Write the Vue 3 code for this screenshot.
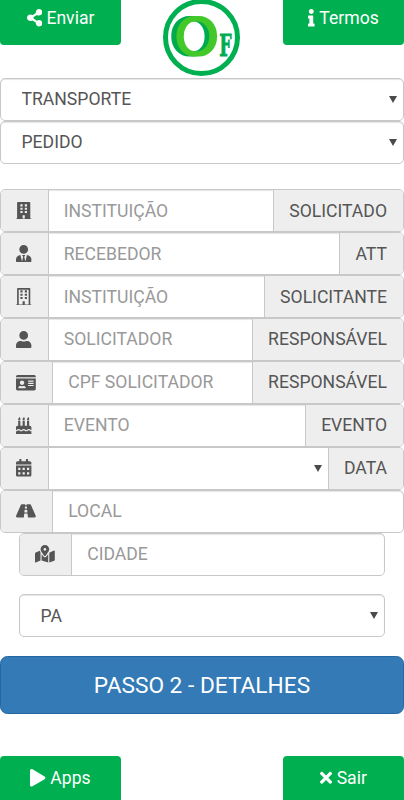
<script setup>
const box = (x, y, w, h) => `M${x} ${y}h${w}v${h}h${-w}z`
const windows = [128, 256].flatMap((x) => [76, 172, 268].map((y) => box(x, y - 8, 64, 60))).join('')
const cells = [64, 192, 320].flatMap((x) => [256, 384].map((y) => box(x, y, 64, 64))).join('')
const flame = (x) => `M${x} 96c-17.75 0-32-14.25-32-32 0-31 32-23 32-64 12 0 32 29.5 32 56s-14.25 40-32 40z`
const line = (y) => `M360 ${y}h144c4.4 0 8 3.6 8 8v16c0 4.4-3.6 8-8 8H360c-4.4 0-8-3.6-8-8v-16c0-4.4 3.6-8 8-8z`

const icons = {
  share: { w: 448, d: 'M352 320c-22.608 0-43.387 7.819-59.79 20.895l-102.486-64.054a96.551 96.551 0 0 0 0-41.683l102.486-64.054C308.613 184.181 329.392 192 352 192c53.019 0 96-42.981 96-96S405.019 0 352 0s-96 42.981-96 96c0 7.158.79 14.13 2.276 20.841L155.79 180.895C139.387 167.819 118.608 160 96 160c-53.019 0-96 42.981-96 96s42.981 96 96 96c22.608 0 43.387-7.819 59.79-20.895l102.486 64.054A96.301 96.301 0 0 0 256 416c0 53.019 42.981 96 96 96s96-42.981 96-96-42.981-96-96-96z' },
  info: { w: 192, d: 'M20 424.229h20V279.771H20c-11.046 0-20-8.954-20-20V212c0-11.046 8.954-20 20-20h112c11.046 0 20 8.954 20 20v212.229h20c11.046 0 20 8.954 20 20V492c0 11.046-8.954 20-20 20H20c-11.046 0-20-8.954-20-20v-47.771c0-11.046 8.954-20 20-20zM96 0C56.235 0 24 32.235 24 72s32.235 72 72 72 72-32.235 72-72S135.764 0 96 0z' },
  building: { w: 448, d: 'M436 480h-20V24c0-13.255-10.745-24-24-24H56C42.745 0 32 10.745 32 24v456H12c-6.627 0-12 5.373-12 12v20h448v-20c0-6.627-5.373-12-12-12z' + windows + box(192, 384, 64, 96) },
  buildingOutline: { w: 448, d: 'M436 480h-20V24c0-13.255-10.745-24-24-24H56C42.745 0 32 10.745 32 24v456H12c-6.627 0-12 5.373-12 12v20h448v-20c0-6.627-5.373-12-12-12zM80 48v431h112v-83c0-6.6 5.4-12 12-12h40c6.6 0 12 5.4 12 12v83h112V48z' + windows },
  userTie: { w: 448, d: 'M224 256c70.7 0 128-57.3 128-128S294.7 0 224 0 96 57.3 96 128s57.3 128 128 128zm95.8 32.6L272 480l-32-136 32-56h-96l32 56-32 136-47.8-191.4C56.9 292 0 350.3 0 422.4V464c0 26.5 21.5 48 48 48h352c26.5 0 48-21.5 48-48v-41.6c0-72.1-56.9-130.4-128.2-133.8z' },
  user: { w: 448, d: 'M224 256c70.7 0 128-57.3 128-128S294.7 0 224 0 96 57.3 96 128s57.3 128 128 128zm89.6 32h-16.7c-22.2 10.2-46.9 16-72.9 16s-50.6-5.8-72.9-16h-16.7C60.2 288 0 348.2 0 422.4V464c0 26.5 21.5 48 48 48h352c26.5 0 48-21.5 48-48v-41.6c0-74.2-60.2-134.4-134.4-134.4z' },
  idCard: { w: 576, d: 'M528 32H48C21.5 32 0 53.5 0 80v16h576V80c0-26.5-21.5-48-48-48zM0 432c0 26.5 21.5 48 48 48h480c26.5 0 48-21.5 48-48V128H0v304zM176 192c35.3 0 64 28.7 64 64s-28.7 64-64 64-64-28.7-64-64 28.7-64 64-64zM67.1 396.2C75.5 370.5 99.6 352 128 352h8.2c12.3 5.1 25.7 8 39.8 8s27.6-2.9 39.8-8h8.2c28.4 0 52.5 18.5 60.9 44.2 3.2 9.9-5.2 19.8-15.6 19.8H82.7c-10.4 0-18.8-10-15.6-19.8z' + line(192) + line(256) + line(320) },
  cake: { w: 448, d: 'M448 384c-28.02 0-31.26-32-74.5-32-43.43 0-46.825 32-74.75 32-27.695 0-31.454-32-74.75-32-42.842 0-47.218 32-74.5 32-28.148 0-31.202-32-74.75-32-43.547 0-46.653 32-74.75 32v-80c0-26.5 21.5-48 48-48h16V112h64v144h64V112h64v144h64V112h64v144h16c26.5 0 48 21.5 48 48v80zm0 128H0v-96c43.356 0 46.767-32 74.75-32 27.951 0 31.253 32 74.75 32 42.843 0 47.217-32 74.5-32 28.148 0 31.201 32 74.75 32 43.357 0 46.767-32 74.75-32 27.488 0 31.252 32 74.5 32v96z' + flame(96) + flame(224) + flame(352) },
  calendar: { w: 448, d: 'M0 464c0 26.5 21.5 48 48 48h352c26.5 0 48-21.5 48-48V192H0v272zM400 64h-48V16c0-8.8-7.2-16-16-16h-32c-8.8 0-16 7.2-16 16v48H160V16c0-8.8-7.2-16-16-16h-32c-8.8 0-16 7.2-16 16v48H48C21.5 64 0 85.5 0 112v48h448v-48c0-26.5-21.5-48-48-48z' + cells },
  road: { w: 576, d: 'M573.19 402.67l-139.79-320C428.43 71.29 417.6 64 405.68 64h-97.59l2.45 23.16c.5 4.72-3.21 8.84-7.96 8.84h-29.16c-4.75 0-8.46-4.12-7.96-8.84L267.91 64h-97.59c-11.93 0-22.76 7.29-27.73 18.67L2.8 402.67C-6.45 423.86 8.31 448 30.54 448h196.84l10.31-97.68c.86-8.14 7.72-14.32 15.91-14.32h68.8c8.19 0 15.05 6.18 15.91 14.32L348.62 448h196.84c22.23 0 36.99-24.14 27.73-45.33zM260.4 135.16a8 8 0 0 1 7.96-7.16h39.29c4.09 0 7.53 3.09 7.96 7.16l4.6 43.58c.75 7.09-4.81 13.26-11.93 13.26h-40.54c-7.13 0-12.68-6.17-11.93-13.26l4.59-43.58zM315.64 304h-55.29c-9.5 0-16.91-8.23-15.91-17.68l5.07-48c.86-8.14 7.72-14.32 15.91-14.32h45.15c8.19 0 15.05 6.18 15.91 14.32l5.07 48c1 9.45-6.41 17.68-15.91 17.68z' },
  map: { w: 576, d: 'M288 0c-69.59 0-126 56.41-126 126 0 56.26 82.35 158.8 113.9 196.02 6.39 7.54 17.82 7.54 24.2 0C331.65 284.8 414 182.26 414 126 414 56.41 357.59 0 288 0zm0 168c-23.2 0-42-18.8-42-42s18.8-42 42-42 42 18.8 42 42-18.8 42-42 42zM20.12 215.95A32.006 32.006 0 0 0 0 245.66v250.32c0 11.32 11.43 19.06 21.94 14.86L160 448V214.92c-8.84-15.98-16.07-31.54-21.25-46.42L20.12 215.95zM288 359.67c-14.07 0-27.38-6.18-36.51-16.96-19.66-23.2-40.57-49.62-59.49-76.72v182l192 64V266c-18.92 27.09-39.82 53.52-59.49 76.72-9.13 10.77-22.44 16.95-36.51 16.95zm266.06-198.51L416 224v288l139.88-55.95A31.996 31.996 0 0 0 576 426.34V176.02c0-11.32-11.43-19.06-21.94-14.86z' },
  play: { w: 448, d: 'M424.4 214.7L72.4 6.6C43.8-10.3 0 6.1 0 47.9V464c0 37.5 40.7 60.1 72.4 41.3l352-208c31.4-18.5 31.5-64.1 0-82.6z' },
  times: { w: 352, d: 'M242.72 256l100.07-100.07c12.28-12.28 12.28-32.19 0-44.48l-22.24-22.24c-12.28-12.28-32.19-12.28-44.48 0L176 189.28 75.93 89.21c-12.28-12.28-32.19-12.28-44.48 0L9.21 111.45c-12.28 12.28-12.28 32.19 0 44.48L109.28 256 9.21 356.07c-12.28 12.28-12.28 32.19 0 44.48l22.24 22.24c12.28 12.28 32.2 12.28 44.48 0L176 322.72l100.07 100.07c12.28 12.28 32.2 12.28 44.48 0l22.24-22.24c12.28-12.28 12.28-32.19 0-44.48L242.72 256z' },
}

const selects = ['TRANSPORTE', 'PEDIDO']
const fields = [
  { icon: 'building', placeholder: 'INSTITUIÇÃO', label: 'SOLICITADO' },
  { icon: 'userTie', placeholder: 'RECEBEDOR', label: 'ATT' },
  { icon: 'buildingOutline', placeholder: 'INSTITUIÇÃO', label: 'SOLICITANTE' },
  { icon: 'user', placeholder: 'SOLICITADOR', label: 'RESPONSÁVEL' },
  { icon: 'idCard', placeholder: 'CPF SOLICITADOR', label: 'RESPONSÁVEL' },
  { icon: 'cake', placeholder: 'EVENTO', label: 'EVENTO' },
  { icon: 'calendar', select: true, label: 'DATA' },
  { icon: 'road', placeholder: 'LOCAL' },
  { icon: 'map', placeholder: 'CIDADE', inset: true },
]
</script>

<template>
  <main class="page">
    <header class="top">
      <button class="nav nav-top">
        <svg class="icon icon-share" :viewBox="`0 0 ${icons.share.w} 512`"><path :d="icons.share.d" /></svg>
        <span>Enviar</span>
      </button>
      <svg class="logo" viewBox="0 0 78 78">
        <circle cx="38.5" cy="38.5" r="36" fill="#fff" stroke="#00b050" stroke-width="5" />
        <rect x="8.300" y="17" width="40" height="40.600" rx="18" ry="19" fill="#00ab50" />
        <rect x="13.500" y="17" width="40.500" height="40.600" rx="18" ry="19" fill="#43c829" />
        <ellipse cx="34" cy="37.400" rx="12.300" ry="14.900" fill="#00ab50" />
        <ellipse cx="31.200" cy="37.400" rx="10.400" ry="14.600" fill="#fff" />
        <text class="logo-f" transform="translate(56.2 56.6) scale(0.6 1)">F</text>
      </svg>
      <button class="nav nav-top">
        <svg class="icon icon-info" :viewBox="`0 0 ${icons.info.w} 512`"><path :d="icons.info.d" /></svg>
        <span>Termos</span>
      </button>
    </header>

    <section class="selects">
      <div v-for="name in selects" :key="name" class="select control">
        <select :aria-label="name"><option>{{ name }}</option></select>
        <i class="arrow"></i>
      </div>
    </section>

    <section class="fields">
      <div v-for="(field, i) in fields" :key="i" class="group" :class="{ inset: field.inset }">
        <span class="addon" :class="{ wide: icons[field.icon].w > 500 }">
          <svg class="icon" :viewBox="`0 0 ${icons[field.icon].w} 512`"><path :d="icons[field.icon].d" /></svg>
        </span>
        <div v-if="field.select" class="select grow">
          <select :aria-label="field.label"></select>
          <i class="arrow"></i>
        </div>
        <input v-else class="grow" type="text" :placeholder="field.placeholder" />
        <span v-if="field.label" class="label">{{ field.label }}</span>
      </div>
    </section>

    <div class="select control state">
      <select aria-label="UF"><option>PA</option></select>
      <i class="arrow"></i>
    </div>

    <button class="next">PASSO 2 - DETALHES</button>

    <footer class="bottom">
      <button class="nav nav-bottom">
        <svg class="icon icon-play" :viewBox="`0 0 ${icons.play.w} 512`"><path :d="icons.play.d" /></svg>
        <span>Apps</span>
      </button>
      <button class="nav nav-bottom">
        <svg class="icon icon-times" :viewBox="`0 0 ${icons.times.w} 512`"><path :d="icons.times.d" /></svg>
        <span>Sair</span>
      </button>
    </footer>
  </main>
</template>

<style>
body {
  background: #fff;
  overflow: hidden;
}
</style>

<style scoped>
.page,
.page * {
  box-sizing: border-box;
}
.page {
  display: flex;
  flex-direction: column;
  width: 404px;
  height: 800px;
  overflow: hidden;
  font-family: Roboto, "Liberation Sans", sans-serif;
  font-size: 17.6px;
  color: #555;
}
button,
select,
input {
  font: inherit;
  color: inherit;
  margin: 0;
  border: 0;
  outline: 0;
}
.top,
.bottom {
  display: flex;
  justify-content: space-between;
  flex: none;
}
.top {
  height: 78px;
}
.nav {
  display: flex;
  justify-content: center;
  align-items: center;
  gap: 4.5px;
  width: 121px;
  padding: 0;
  background: #00b050;
  color: #fff;
}
.nav-top {
  height: 45.4px;
  padding-bottom: 9.6px;
  border-radius: 0 0 4px 4px;
}
.nav-bottom {
  height: 44px;
  border-radius: 4px 4px 0 0;
}
.icon {
  display: block;
  height: 17.6px;
  fill: currentColor;
  fill-rule: evenodd;
}
.icon-share,
.icon-play {
  width: 15.4px;
}
.icon-info {
  width: 6.6px;
}
.icon-times {
  width: 12.1px;
}
.logo {
  width: 78px;
  height: 78px;
  margin-top: -1px;
}
.logo-f {
  font: bold 29px "DejaVu Serif", serif;
  fill: #00ab50;
  stroke: #00ab50;
  stroke-width: 0.8px;
}
.selects {
  flex: none;
  margin-bottom: 25.3px;
}
.select {
  display: grid;
  align-items: center;
  background: #fff;
}
.select > * {
  grid-area: 1 / 1;
}
.select select {
  appearance: none;
  width: 100%;
  height: 100%;
  padding: 0 30px 0 20.5px;
  background: transparent;
}
.control {
  height: 42.95px;
  border: 1px solid #c8c8c8;
  border-radius: 5px;
  box-shadow: inset 0 1px 1px rgba(0, 0, 0, 0.1);
}
.arrow {
  justify-self: end;
  margin-right: 6px;
  border: solid transparent;
  border-width: 7.5px 4px 0;
  border-top-color: #4a4a4a;
  pointer-events: none;
}
.fields {
  flex: none;
}
.group {
  display: flex;
  height: 42.95px;
  border: 1px solid #c8c8c8;
  border-radius: 5px;
  overflow: hidden;
  box-shadow: inset 0 1px 1px rgba(0, 0, 0, 0.1);
}
.inset {
  margin: 0 19px;
}
.addon,
.label {
  display: flex;
  flex: none;
  align-items: center;
  justify-content: center;
  background: #eee;
}
.addon {
  width: 47.5px;
  padding-right: 0.6px;
  border-right: 1px solid #c8c8c8;
}
.addon .icon {
  width: 15.4px;
}
.addon.wide {
  width: 52px;
}
.addon.wide .icon {
  width: 19.8px;
}
.label {
  padding: 0 16px 0 15.3px;
  border-left: 1px solid #c8c8c8;
}
.grow {
  flex: 1;
  min-width: 0;
}
input {
  padding: 0 15.2px;
  background: transparent;
}
input::placeholder {
  color: #999;
  opacity: 1;
}
.state {
  flex: none;
  margin: 18.5px 19px 0;
}
.next {
  flex: none;
  height: 58.3px;
  margin-top: 19px;
  border: 1px solid #2467a3;
  border-radius: 7.5px;
  background: #337ab7;
  color: #fff;
  font-size: 22.7px;
}
.bottom {
  margin-top: auto;
}
</style>
